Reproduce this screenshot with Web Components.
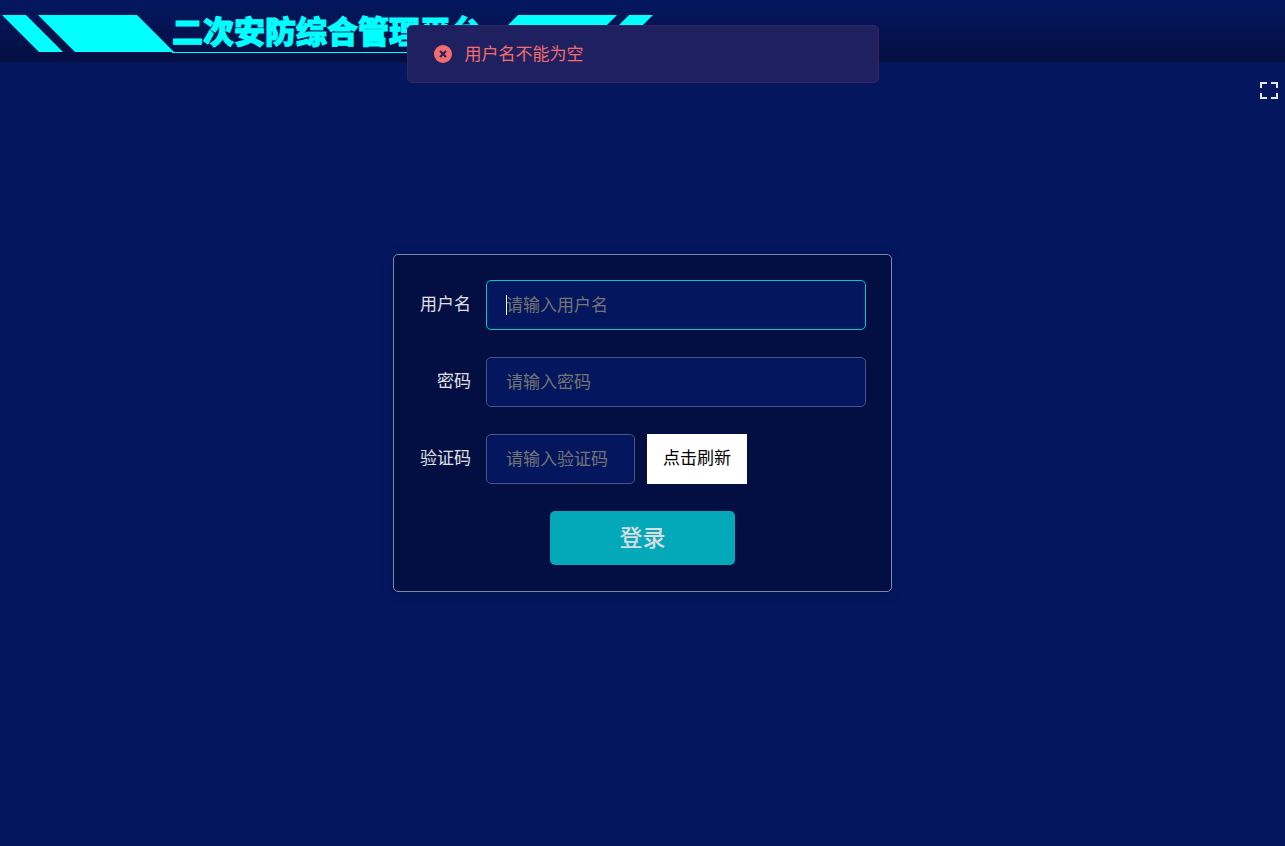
<!DOCTYPE html>
<html lang="zh-CN">
<head>
<meta charset="utf-8">
<meta name="viewport" content="width=device-width, initial-scale=1">
<title>二次安防综合管理平台</title>
<style>
html, body { height: 100%; margin: 0; }
body { background: #04165d; color: #e0e0e3; font: 17px/24px "Noto Sans CJK SC", sans-serif; }
</style>
</head>
<body>
<login-page></login-page>

<script>
function define(name, html, setup) {
  const template = document.createElement('template');
  template.innerHTML = html;
  customElements.define(name, class extends HTMLElement {
    constructor() {
      super();
      this.attachShadow({ mode: 'open', delegatesFocus: name === 'form-field' })
        .append(template.content.cloneNode(true));
    }
    connectedCallback() {
      if (setup && !this.ready) { this.ready = true; setup(this, this.shadowRoot); }
    }
  });
}

define('site-header', `
  <style>
    :host { display: flex; align-items: flex-start; box-sizing: border-box; min-height: 62px; padding: 15px 2px 0; background: linear-gradient(#04175f, #040f42); color: #00ffff; }
    svg { flex: none; width: 172px; height: 37px; fill: currentColor; }
    .right { transform: scaleX(-1); }
    h1 { flex: none; margin: 0 -1px 0 -2px; font-size: 31px; line-height: 29px; padding-bottom: 8px; font-weight: 900; -webkit-text-stroke: 1px currentColor; border-bottom: 1px solid currentColor; white-space: nowrap; }
  </style>
  <svg viewBox="0 0 172 37" aria-hidden="true"><path d="M0 0h24l37 37H37zM36 0h99l37 37H73z"/></svg>
  <h1><slot></slot></h1>
  <svg class="right" viewBox="0 0 172 37" aria-hidden="true"><path d="M0 0h24l37 37H37zM36 0h99l37 37H73z"/></svg>
`);

define('full-screen-button', `
  <style>
    :host { display: flex; justify-content: flex-end; padding: 20px 7px 0; }
    button { display: block; padding: 0; border: 0; background: none; color: #e4e6ee; cursor: pointer; }
    svg { display: block; width: 18px; height: 17px; fill: none; stroke: currentColor; stroke-width: 2; }
  </style>
  <button type="button" aria-label="全屏">
    <svg viewBox="0 0 18 17"><path d="M1 6V1h6M11 1h6v5M1 11v5h6M11 16h6v-5"/></svg>
  </button>
`, (host, root) => {
  root.querySelector('button').addEventListener('click', () => document.documentElement.requestFullscreen());
});

define('toast-message', `
  <style>
    :host { display: flex; align-items: center; gap: 13px; box-sizing: border-box; width: 472px; max-width: 90%; height: 58px; padding: 0 26px; border: 1px solid #38245f; border-radius: 5px; background: #1e2060; color: #f56c6c; }
    svg { flex: none; width: 18px; height: 18px; }
    span { padding-bottom: 2px; }
  </style>
  <svg viewBox="0 0 18 18" aria-hidden="true"><circle cx="9" cy="9" r="9" fill="#f56c6c"/><path d="M6 6l6 6M12 6l-6 6" stroke="#1e2060" stroke-width="2"/></svg>
  <span role="alert"><slot></slot></span>
`);

define('form-field', `
  <style>
    :host { display: flex; align-items: center; gap: 15px; }
    label { flex: none; width: 52px; padding-bottom: 4px; text-align: right; white-space: nowrap; }
    input { flex: 1; min-width: 0; box-sizing: border-box; height: 50px; padding: 0 19px 3px; border: 1px solid #4a5488; border-radius: 5px; outline: 0; background: #04165d; color: #e0e0e3; font: inherit; }
    input::placeholder { color: #757575; opacity: 1; }
    input:focus { border-color: #00c8cd; }
    input:focus:placeholder-shown { caret-color: transparent; background: linear-gradient(#fff, #fff) 19px 14px / 1px 20px no-repeat #04165d; }
    :host([short]) input { flex: 0 1 149px; }
    ::slotted(*) { margin-left: -3px; }
  </style>
  <label for="field"></label>
  <input id="field">
  <slot></slot>
`, (host, root) => {
  const input = root.querySelector('input');
  root.querySelector('label').textContent = host.getAttribute('label');
  input.placeholder = '请输入' + host.getAttribute('label');
  input.type = host.getAttribute('type') || 'text';
  if (host.hasAttribute('focused')) input.focus();
});

define('captcha-button', `
  <style>
    :host { display: block; flex: none; }
    button { display: block; width: 100px; height: 50px; padding: 0 0 4px; border: 0; background: #fff; color: #000; font: inherit; cursor: pointer; }
  </style>
  <button type="button"><slot></slot></button>
`);

define('login-card', `
  <style>
    :host { display: block; box-sizing: border-box; width: 499px; max-width: 100%; padding: 25px 25px 26px; border: 1px solid #8087a8; border-radius: 5px; background: #030f42; box-shadow: 0 2px 14px rgba(0, 0, 0, .1); }
    form { display: flex; flex-direction: column; gap: 27px; }
    .submit { align-self: center; width: 185px; height: 54px; padding: 0 0 4px; border: 0; border-radius: 5px; background: #03a9b9; color: #d8dde0; font: inherit; font-size: 23px; font-weight: 500; cursor: pointer; }
  </style>
  <form>
    <form-field label="用户名" focused></form-field>
    <form-field label="密码" type="password"></form-field>
    <form-field label="验证码" short><captcha-button>点击刷新</captcha-button></form-field>
    <button class="submit" type="button">登录</button>
  </form>
`);

define('login-page', `
  <style>
    :host { display: grid; grid-template-rows: auto 1fr; min-height: 100%; position: relative; }
    .top { grid-area: 1 / 1; }
    main { grid-area: 1 / 1 / 3 / 2; display: grid; place-items: center; pointer-events: none; }
    login-card { pointer-events: auto; }
    .toast { position: absolute; top: 25px; left: 0; right: 0; display: flex; justify-content: center; pointer-events: none; }
  </style>
  <div class="top">
    <site-header>二次安防综合管理平台</site-header>
    <full-screen-button></full-screen-button>
  </div>
  <main><login-card></login-card></main>
  <div class="toast"><toast-message>用户名不能为空</toast-message></div>
`);
</script>
</body>
</html>
